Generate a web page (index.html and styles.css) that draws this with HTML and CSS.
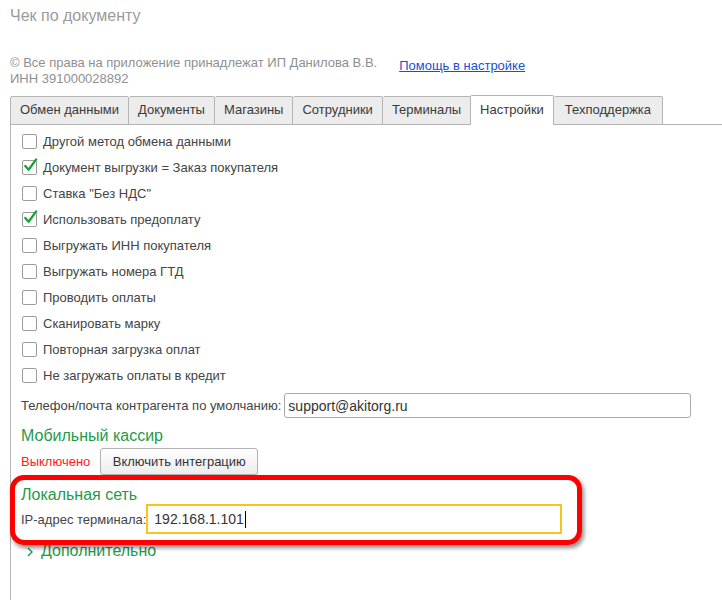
FILE: index.html
```html
<!DOCTYPE html>
<html lang="ru">
<head>
<meta charset="utf-8">
<title>Чек по документу</title>
<link rel="stylesheet" href="styles.css">
</head>
<body>
<div class="title">Чек по документу</div>
<div class="info">
  <div class="copy">© Все права на приложение принадлежат ИП Данилова В.В.<br>ИНН 391000028892</div>
  <a class="help" href="#">Помощь в настройке</a>
</div>
<div class="tabs">
  <div class="tab">Обмен данными</div>
  <div class="tab">Документы</div>
  <div class="tab">Магазины</div>
  <div class="tab">Сотрудники</div>
  <div class="tab">Терминалы</div>
  <div class="tab active">Настройки</div>
  <div class="tab">Техподдержка</div>
</div>
<div class="panel">
  <div class="checks">
    <div class="check"><span class="box"></span>Другой метод обмена данными</div>
    <div class="check"><span class="box"><svg class="tick" viewBox="0 0 16 16"><path d="M2.5 8.5 L6 12.5 L14 1.5" fill="none" stroke="#16a03a" stroke-width="2.4" stroke-linecap="round" stroke-linejoin="round"/></svg></span>Документ выгрузки = Заказ покупателя</div>
    <div class="check"><span class="box"></span>Ставка "Без НДС"</div>
    <div class="check"><span class="box"><svg class="tick" viewBox="0 0 16 16"><path d="M2.5 8.5 L6 12.5 L14 1.5" fill="none" stroke="#16a03a" stroke-width="2.4" stroke-linecap="round" stroke-linejoin="round"/></svg></span>Использовать предоплату</div>
    <div class="check"><span class="box"></span>Выгружать ИНН покупателя</div>
    <div class="check"><span class="box"></span>Выгружать номера ГТД</div>
    <div class="check"><span class="box"></span>Проводить оплаты</div>
    <div class="check"><span class="box"></span>Сканировать марку</div>
    <div class="check"><span class="box"></span>Повторная загрузка оплат</div>
    <div class="check"><span class="box"></span>Не загружать оплаты в кредит</div>
  </div>
  <div class="field-row phone">
    <span class="label">Телефон/почта контрагента по умолчанию:</span>
    <div class="input phone-input">support@akitorg.ru</div>
  </div>
  <div class="group-title mobile">Мобильный кассир</div>
  <div class="btn-row">
    <span class="off">Выключено</span>
    <div class="button">Включить интеграцию</div>
  </div>
  <div class="group-title local">Локальная сеть</div>
  <div class="field-row ip">
    <span class="label">IP-адрес терминала:</span>
    <div class="input ip-input">192.168.1.101<span class="caret"></span></div>
  </div>
  <div class="more"><svg class="chev" viewBox="0 0 8 12"><path d="M2 2 L6 6 L2 10" fill="none" stroke="#1f9a4a" stroke-width="1.4"/></svg>Дополнительно</div>
  <div class="highlight"></div>
</div>
</body>
</html>
```

FILE: styles.css
```css
html, body {
  margin: 0;
  padding: 0;
  background: #fff;
}
body {
  font-family: "Liberation Sans", Arial, sans-serif;
  font-size: 13px;
  color: #444;
  height: 600px;
  overflow: hidden;
}
.title {
  padding: 6px 10px 0;
  height: 20px;
  line-height: 20px;
  font-size: 16px;
  color: #9b9b9b;
}
.info {
  display: flex;
  align-items: flex-start;
  margin: 29px 0 0 10px;
  height: 32px;
}
.copy {
  line-height: 16px;
  color: #8f8f8f;
}
.help {
  margin: 3px 0 0 22px;
  line-height: 16px;
  color: #1a4fd0;
  text-decoration: underline;
}
.tabs {
  display: flex;
  align-items: flex-end;
  height: 29px;
  margin: 9px 0 -1px 10px;
  position: relative;
  z-index: 2;
}
.tab {
  height: 27px;
  line-height: 26px;
  padding: 0 9px;
  background: #ececec;
  border: 1px solid #b5b5b5;
  border-left: none;
  border-radius: 2px 2px 0 0;
  color: #3a3a3a;
}
.tab:first-child {
  border-left: 1px solid #b5b5b5;
}
.tab:last-child {
  padding: 0 11px;
}
.tab.active {
  height: 29px;
  line-height: 28px;
  background: #fff;
  border-bottom: none;
  border-left: 1px solid #b5b5b5;
  margin-left: -1px;
}
.panel {
  position: relative;
  margin-left: 10px;
  border-top: 1px solid #b5b5b5;
  border-left: 1px solid #b5b5b5;
  padding: 3px 0 0 10px;
  height: 480px;
}
.check {
  display: flex;
  align-items: center;
  height: 26px;
}
.box {
  position: relative;
  width: 13px;
  height: 13px;
  border: 1px solid #9c9c9c;
  border-radius: 2px;
  margin: 0 6px 0 1px;
  background: #fff;
}
.tick {
  position: absolute;
  left: 0;
  top: -3px;
  width: 15px;
  height: 15px;
}
.field-row {
  display: flex;
  align-items: center;
}
.phone {
  margin-top: 5px;
  height: 25px;
  gap: 3px;
}
.input {
  box-sizing: border-box;
  background: #fff;
  color: #333;
  font-size: 14px;
  display: flex;
  align-items: center;
}
.phone-input {
  width: 407px;
  height: 25px;
  border: 1px solid #a9a9a9;
  border-radius: 3px;
  padding-left: 3px;
}
.group-title {
  font-size: 16px;
  color: #1f9a4a;
}
.mobile {
  margin-top: 8px;
  line-height: 20px;
}
.btn-row {
  display: flex;
  align-items: center;
  margin-top: 2px;
  height: 27px;
  gap: 10px;
}
.off {
  color: #ff1a1a;
}
.button {
  box-sizing: border-box;
  width: 158px;
  height: 27px;
  line-height: 25px;
  text-align: center;
  border: 1px solid #b3b3b3;
  border-radius: 3px;
  background: linear-gradient(#ffffff, #ececec);
  color: #333;
  box-shadow: 0 1px 1px rgba(0,0,0,0.12);
}
.local {
  margin-top: 11px;
  line-height: 18px;
}
.ip {
  height: 30px;
  gap: 0;
}
.ip-input {
  width: 416px;
  height: 30px;
  border: 2px solid #f6c51c;
  padding-left: 6px;
}
.caret {
  display: inline-block;
  width: 1px;
  height: 17px;
  background: #000;
  margin-left: 1px;
}
.more {
  margin-top: 8px;
  line-height: 18px;
  font-size: 16px;
  color: #1f9a4a;
  display: flex;
  align-items: center;
}
.chev {
  width: 8px;
  height: 12px;
  margin: 1px 7px 0 5px;
}
.highlight {
  position: absolute;
  left: -1px;
  top: 350px;
  width: 572px;
  height: 70px;
  box-sizing: border-box;
  border: 5px solid #ff0000;
  border-radius: 14px;
  box-shadow: 2px 3px 4px rgba(0,0,0,0.45);
  pointer-events: none;
}
```
